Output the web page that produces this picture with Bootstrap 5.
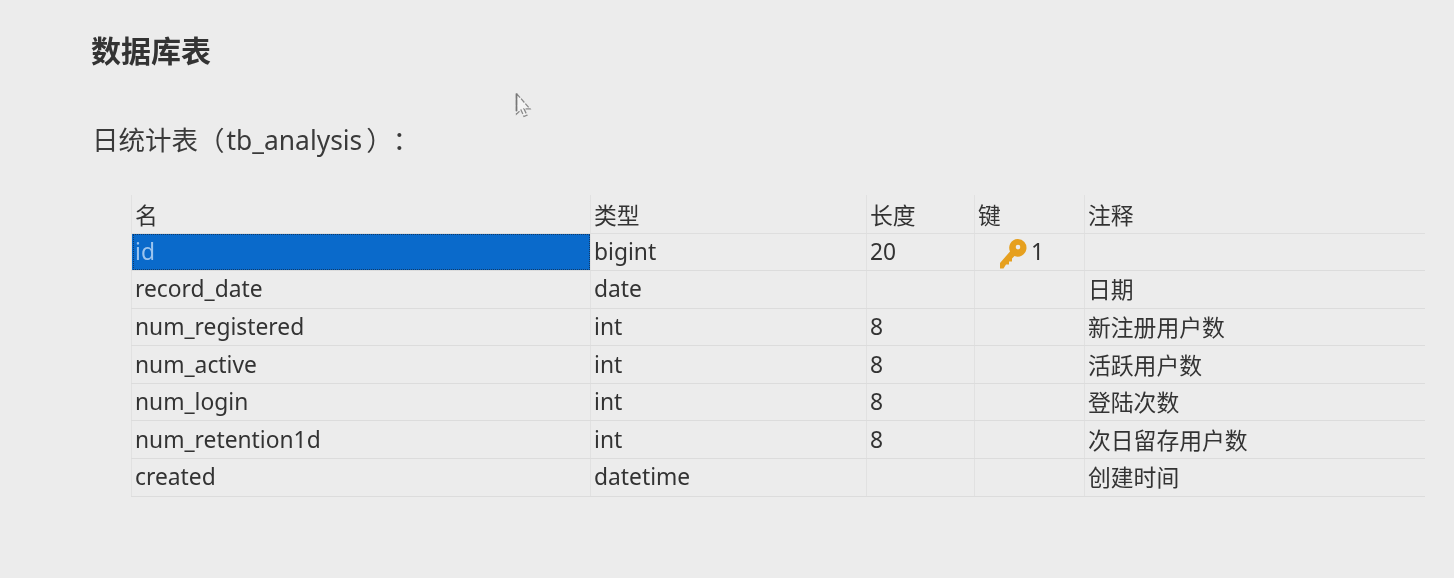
<!DOCTYPE html>
<html lang="zh">
<head>
<meta charset="utf-8">
<title>数据库表</title>
<link href="https://cdn.jsdelivr.net/npm/bootstrap@5.3.0/dist/css/bootstrap.min.css" rel="stylesheet">
<style>
html,body{height:578px;overflow:hidden}
body{background:#ececec;color:#2c2c2c;font-family:"Noto Sans","Noto Sans CJK SC",sans-serif;position:relative}
.sheet{padding:30px 30px 0 91px;filter:blur(.35px)}
.doc-title{font-family:"Noto Sans CJK SC",sans-serif;font-size:30px;font-weight:700;line-height:38px;margin:0;color:#333}
.doc-sub{font-size:26.400px;line-height:36px;margin:53px 0 0 1px;color:#3a3a3a;font-weight:400;text-spacing-trim:space-all}
.doc-sub .cjk{font-family:"Noto Sans CJK SC",sans-serif;font-size:26.500px}
.doc-sub .pad-l{margin-right:2px}
.doc-sub .pad-r{margin-left:4px}
.tbl-wrap{margin:37px 0 0 40px}
.db-table{table-layout:fixed;width:1293px;margin:0;--bs-table-bg:transparent;--bs-table-color:#333;border-collapse:collapse}
.db-table th,.db-table td{height:37.600px;padding:0 0 0 3px;font-size:22.800px;font-weight:400;line-height:30px;vertical-align:middle;border-bottom:1px solid #dcdcdc;border-left:1px solid #e1e1e1;white-space:nowrap;box-shadow:none}
.db-table th{height:38px;padding-top:3px;font-family:"Noto Sans CJK SC",sans-serif;border-bottom-color:#dedede}
.db-table td.cn{font-family:"Noto Sans CJK SC",sans-serif}
.db-table td.sel{background:#0a6acb;color:#9cc4ee;outline:1px dotted #123a66;outline-offset:-2px}
.c1{width:459px}.c2{width:276px}.c3{width:108px}.c4{width:110px}.c5{width:340px}
.key-cell{padding-left:24px!important}
.key-num{display:flex;align-items:center;gap:4px;height:30px}
.key-num svg{margin-top:2px;margin-bottom:-2px}
.cursor{position:absolute;left:515px;top:92px;width:18px;height:27px}
</style>
</head>
<body>
<main class="sheet">
  <h1 class="doc-title">数据库表</h1>
  <p class="doc-sub"><span class="cjk pad-l">日统计表（</span>tb_analysis<span class="cjk pad-r">）：</span></p>
  <div class="tbl-wrap">
    <table class="table db-table">
      <colgroup><col class="c1"><col class="c2"><col class="c3"><col class="c4"><col class="c5"></colgroup>
      <thead><tr><th>名</th><th>类型</th><th>长度</th><th>键</th><th>注释</th></tr></thead>
      <tbody>
        <tr><td class="sel">id</td><td>bigint</td><td>20</td><td class="key-cell"><span class="key-num"><svg width="28" height="30" viewBox="0 0 28 30"><path fill-rule="evenodd" fill="#e6a01f" d="M18.500 0a8.800 8.800 0 1 1-3 17L13 19.500v3h-3v3H7L4.500 29.500H1V24L11 12.500A8.800 8.800 0 0 1 18.500 0zm.5 5.800a2.300 2.300 0 1 0 0 4.600 2.300 2.300 0 0 0 0-4.600z"/></svg>1</span></td><td></td></tr>
        <tr><td>record_date</td><td>date</td><td></td><td></td><td class="cn">日期</td></tr>
        <tr><td>num_registered</td><td>int</td><td>8</td><td></td><td class="cn">新注册用户数</td></tr>
        <tr><td>num_active</td><td>int</td><td>8</td><td></td><td class="cn">活跃用户数</td></tr>
        <tr><td>num_login</td><td>int</td><td>8</td><td></td><td class="cn">登陆次数</td></tr>
        <tr><td>num_retention1d</td><td>int</td><td>8</td><td></td><td class="cn">次日留存用户数</td></tr>
        <tr><td>created</td><td>datetime</td><td></td><td></td><td class="cn">创建时间</td></tr>
      </tbody>
    </table>
  </div>
</main>
<svg class="cursor" viewBox="0 0 18 27" aria-hidden="true"><path d="M1.500 1.500V22l4.500-4 3 6.500 3-1.300-3-6.300h6z" fill="#f4f4f4" stroke="#8a8a8a" stroke-width="1.300" stroke-dasharray="5 1.500"/><path d="M1.500 1.500V19" fill="none" stroke="#777" stroke-width="1.600"/></svg>
</body>
</html>
